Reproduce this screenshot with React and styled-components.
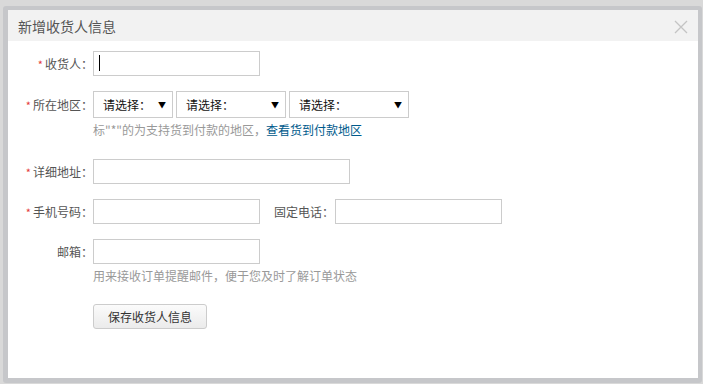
import React from 'react';
import styled, {createGlobalStyle} from 'styled-components';

const GlobalStyle = createGlobalStyle`
html, body {
  margin: 0;
  padding: 0;
  background: #d9d9d9;
  font-family: "Microsoft YaHei", "Noto Sans CJK SC", "Noto Sans", sans-serif;
  font-size: 12px;
  overflow: hidden;
}
* { box-sizing: border-box; }
`;

const Page = styled.div`
width: 703px;
height: 384px;
padding: 6px 1px 0 3px;
`;

const Frame = styled.div`
height: 377px;
padding: 4px 4px 5px 5px;
background: #c6c7ca;
border-radius: 3px;
`;

const Dialog = styled.div`
height: 100%;
background: #fff;
display: flex;
flex-direction: column;
`;

const Header = styled.div`
height: 31px;
background: #f2f2f2;
display: flex;
align-items: center;
justify-content: space-between;
padding: 0 10px 0 10px;
`;

const Title = styled.div`
font-size: 14px;
color: #555;
`;

const Close = styled.svg`
width: 14px;
height: 14px;
margin-top: 2px;
`;

const Body = styled.div`
padding-top: 10px;
`;

const Row = styled.div`
display: flex;
align-items: center;
margin-bottom: ${({$mb}) => $mb ?? 15}px;
`;

const Label = styled.label`
width: 85px;
flex-shrink: 0;
text-align: right;
color: #555;
white-space: nowrap;
`;

const InlineLabel = styled.label`
margin-left: 14px;
margin-right: 1px;
color: #555;
white-space: nowrap;
`;

const Star = styled.span`
color: #e4393c;
margin-right: 2px;
font-size: 11px;
`;

const InputWrap = styled.div`
position: relative;
`;

const Input = styled.input`
display: block;
width: ${({$w}) => $w}px;
height: 25px;
border: 1px solid #ccc;
outline: none;
padding: 0 5px;
font: inherit;
`;

const Caret = styled.span`
position: absolute;
left: 6px;
top: 4px;
width: 1px;
height: 16px;
background: #000;
`;

const Selects = styled.div`
display: flex;
gap: 3px;
`;

const Select = styled.div`
width: ${({$w}) => $w}px;
height: 27px;
border: 1px solid #ccc;
display: flex;
align-items: center;
justify-content: space-between;
padding: 0 6px 0 9px;
color: #111;
`;

const Arrow = styled.span`
font-size: 8px;
color: #000;
`;

const Hint = styled.div`
margin-left: 85px;
line-height: 18px;
color: #999;
margin-top: ${({$mt}) => $mt}px;
margin-bottom: ${({$mb}) => $mb}px;
`;

const Link = styled.a`
color: #005a8c;
text-decoration: none;
`;

const Button = styled.button`
margin-left: 85px;
height: 25px;
width: 114px;
border: 1px solid #ccc;
border-radius: 3px;
background: linear-gradient(#fbfbfb, #ebebeb);
color: #333;
font: inherit;
padding: 0;
`;

const App = () => {
  return (
    <>
      <GlobalStyle/>
      <Page>
        <Frame>
          <Dialog>
            <Header>
              <Title>新增收货人信息</Title>
              <Close viewBox="0 0 14 14">
                <path d="M1 1 L13 13 M13 1 L1 13" stroke="#c4c4c4" strokeWidth="1.3" fill="none"/>
              </Close>
            </Header>
            <Body>
              <Row>
                <Label><Star>*</Star>收货人：</Label>
                <InputWrap>
                  <Input $w={167}/>
                  <Caret/>
                </InputWrap>
              </Row>
              <Row $mb={0}>
                <Label><Star>*</Star>所在地区：</Label>
                <Selects>
                  <Select $w={80}>请选择：<Arrow>▼</Arrow></Select>
                  <Select $w={110}>请选择：<Arrow>▼</Arrow></Select>
                  <Select $w={120}>请选择：<Arrow>▼</Arrow></Select>
                </Selects>
              </Row>
              <Hint $mt={3} $mb={20}>
                标"*"的为支持货到付款的地区，<Link>查看货到付款地区</Link>
              </Hint>
              <Row>
                <Label><Star>*</Star>详细地址：</Label>
                <Input $w={257}/>
              </Row>
              <Row>
                <Label><Star>*</Star>手机号码：</Label>
                <Input $w={167}/>
                <InlineLabel>固定电话：</InlineLabel>
                <Input $w={167}/>
              </Row>
              <Row $mb={0}>
                <Label>邮箱：</Label>
                <Input $w={167}/>
              </Row>
              <Hint $mt={3} $mb={19}>
                用来接收订单提醒邮件，便于您及时了解订单状态
              </Hint>
              <Button>保存收货人信息</Button>
            </Body>
          </Dialog>
        </Frame>
      </Page>
    </>
  );
};

export default App;
